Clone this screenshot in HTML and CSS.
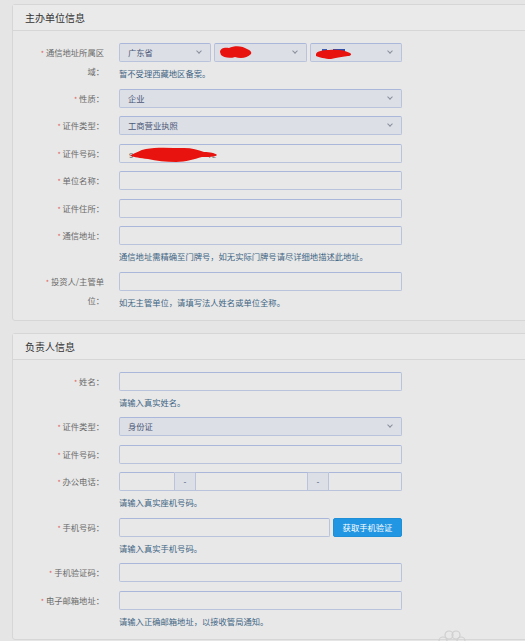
FILE: index.html
```html
<!DOCTYPE html>
<html lang="zh-CN">
<head>
<meta charset="utf-8">
<title>备案信息</title>
<link rel="stylesheet" href="styles.css">
</head>
<body>
<div class="page">
  <section class="panel">
    <div class="panel-head">主办单位信息</div>
    <div class="panel-body">
      <div class="row">
        <label class="lbl"><span class="req">*</span> 通信地址所属区域：</label>
        <div class="ctl">
          <div class="sel-group">
            <div class="sel"><span>广东省</span><i class="chev"></i></div>
            <div class="sel redacted"><svg class="blob" width="40" height="18" viewBox="0 0 40 18"><path d="M3 8 C3 4 8 3 12 4 C18 1 26 2 30 5 C33 6 35 8 34 10 C30 14 24 15 18 13 C12 15 6 13 4 11 Z" fill="#e8120e"/></svg><i class="chev"></i></div>
            <div class="sel redacted"><svg class="blob" width="42" height="18" viewBox="0 0 42 18"><rect x="9" y="5" width="5" height="3" fill="#3b5bb0"/><rect x="20" y="5" width="12" height="3" fill="#2f4fa8"/><path d="M3 10 C4 7 10 6 16 6 C24 5 32 6 37 9 C39 10 38 12 35 12 C28 13 22 14 18 15 C12 15 6 13 3 12 Z" fill="#e8120e"/></svg><i class="chev"></i></div>
          </div>
          <p class="help">暂不受理西藏地区备案。</p>
        </div>
      </div>
      <div class="row">
        <label class="lbl"><span class="req">*</span> 性质：</label>
        <div class="ctl"><div class="sel"><span>企业</span><i class="chev"></i></div></div>
      </div>
      <div class="row">
        <label class="lbl"><span class="req">*</span> 证件类型：</label>
        <div class="ctl"><div class="sel"><span>工商营业执照</span><i class="chev"></i></div></div>
      </div>
      <div class="row">
        <label class="lbl"><span class="req">*</span> 证件号码：</label>
        <div class="ctl"><div class="inp redacted"><svg class="blob" width="100" height="19" viewBox="0 0 100 19"><text x="7" y="13" font-size="8" fill="#555" font-family="Liberation Sans, sans-serif">9</text><text x="86" y="13" font-size="7" fill="#666" font-family="Liberation Sans, sans-serif">7L</text><path d="M9 10 C14 8 18 5 24 4 C34 2 48 3 62 3 C70 3 76 5 82 7 C88 7 93 8 95 10 C93 12 86 12 80 12 C72 14 64 17 54 17 C44 17 34 16 26 14 C18 13 12 12 9 11 Z" fill="#e8120e"/></svg></div></div>
      </div>
      <div class="row">
        <label class="lbl"><span class="req">*</span> 单位名称：</label>
        <div class="ctl"><div class="inp"></div></div>
      </div>
      <div class="row">
        <label class="lbl"><span class="req">*</span> 证件住所：</label>
        <div class="ctl"><div class="inp"></div></div>
      </div>
      <div class="row">
        <label class="lbl"><span class="req">*</span> 通信地址：</label>
        <div class="ctl">
          <div class="inp"></div>
          <p class="help">通信地址需精确至门牌号，如无实际门牌号请尽详细地描述此地址。</p>
        </div>
      </div>
      <div class="row">
        <label class="lbl"><span class="req">*</span> 投资人/主管单位：</label>
        <div class="ctl">
          <div class="inp"></div>
          <p class="help">如无主管单位，请填写法人姓名或单位全称。</p>
        </div>
      </div>
    </div>
  </section>

  <section class="panel">
    <div class="panel-head">负责人信息</div>
    <div class="panel-body">
      <div class="row">
        <label class="lbl"><span class="req">*</span> 姓名：</label>
        <div class="ctl">
          <div class="inp"></div>
          <p class="help">请输入真实姓名。</p>
        </div>
      </div>
      <div class="row">
        <label class="lbl"><span class="req">*</span> 证件类型：</label>
        <div class="ctl"><div class="sel"><span>身份证</span><i class="chev"></i></div></div>
      </div>
      <div class="row">
        <label class="lbl"><span class="req">*</span> 证件号码：</label>
        <div class="ctl"><div class="inp"></div></div>
      </div>
      <div class="row">
        <label class="lbl"><span class="req">*</span> 办公电话：</label>
        <div class="ctl">
          <div class="phone">
            <div class="inp p1"></div>
            <div class="addon">-</div>
            <div class="inp p2"></div>
            <div class="addon">-</div>
            <div class="inp p3"></div>
          </div>
          <p class="help">请输入真实座机号码。</p>
        </div>
      </div>
      <div class="row">
        <label class="lbl"><span class="req">*</span> 手机号码：</label>
        <div class="ctl">
          <div class="mobile">
            <div class="inp"></div>
            <button class="btn" type="button">获取手机验证</button>
          </div>
          <p class="help">请输入真实手机号码。</p>
        </div>
      </div>
      <div class="row">
        <label class="lbl"><span class="req">*</span> 手机验证码：</label>
        <div class="ctl"><div class="inp"></div></div>
      </div>
      <div class="row">
        <label class="lbl"><span class="req">*</span> 电子邮箱地址：</label>
        <div class="ctl">
          <div class="inp"></div>
          <p class="help">请输入正确邮箱地址，以接收管局通知。</p>
        </div>
      </div>
    </div>
  </section>
</div>
<svg class="watermark" width="34" height="16" viewBox="0 0 34 16">
  <circle cx="9" cy="13" r="4" fill="none" stroke="#cfcfcf" stroke-width="1.2"/>
  <circle cx="15" cy="7" r="4" fill="none" stroke="#cfcfcf" stroke-width="1.2"/>
  <circle cx="22" cy="7" r="4" fill="none" stroke="#cfcfcf" stroke-width="1.2"/>
  <circle cx="27" cy="13" r="4" fill="none" stroke="#cfcfcf" stroke-width="1.2"/>
</svg>
</body>
</html>
```

FILE: styles.css
```css
* { box-sizing: border-box; }

html, body {
  margin: 0;
  padding: 0;
  background: #e5e5e5;
  height: 641px;
  overflow: hidden;
}

body {
  font-family: "Noto Sans CJK SC", "Noto Sans", sans-serif;
  font-size: 8.3px;
  line-height: 19px;
  color: #666;
  position: relative;
}

.page {
  padding: 4px 0 0 12px;
  overflow: hidden;
}

.panel {
  margin-right: -6px;
  background: #e8e8e8;
  border: 1px solid #d6d6d6;
  border-radius: 3px;
}

.panel + .panel {
  margin-top: 12px;
}

.panel-head {
  height: 26px;
  line-height: 25px;
  padding-left: 12px;
  font-size: 10px;
  color: #333;
  background: #eaeaea;
  border-bottom: 1px solid #d6d6d6;
}

.panel-body {
  padding: 12px 0 11px 21px;
}

.row {
  display: grid;
  grid-template-columns: 70px 283px;
  column-gap: 15px;
  align-items: start;
  margin-bottom: 8.5px;
}

.row:last-child {
  margin-bottom: 0;
}

.lbl {
  display: block;
  height: 19px;
  text-align: right;
  line-height: 19px;
  color: #6a6a6a;
}

.req {
  color: #e0605a;
  font-size: 7px;
  line-height: 0;
}

.ctl {
  min-width: 0;
}

.help {
  margin: 0;
  padding-top: 4px;
  height: 18px;
  line-height: 14px;
  color: #3e6584;
  white-space: nowrap;
  overflow: hidden;
}

.inp,
.sel {
  position: relative;
  height: 19px;
  border: 1px solid #b9c3dc;
  border-top-color: #aab7da;
  border-radius: 2px;
  background: #e8e8e8;
}

.sel {
  background: #dcdfe6;
  color: #4c5878;
  line-height: 17px;
  padding-left: 8px;
}

.chev {
  position: absolute;
  right: 9px;
  top: 5px;
  width: 4px;
  height: 4px;
  border-right: 1px solid #8a8f9c;
  border-bottom: 1px solid #8a8f9c;
  transform: rotate(45deg);
}

.sel-group {
  display: grid;
  grid-template-columns: 1fr 1fr 1fr;
  column-gap: 3px;
}

.blob {
  position: absolute;
  left: 2px;
  top: 0;
}

.phone {
  display: flex;
  height: 19px;
}

.phone .inp {
  border-radius: 0;
}

.phone .p1 { width: 56px; border-radius: 2px 0 0 2px; }
.phone .p2 { width: 113px; }
.phone .p3 { flex: 1; border-radius: 0 2px 2px 0; }

.addon {
  width: 20px;
  height: 19px;
  line-height: 17px;
  text-align: center;
  background: #dcdfe6;
  border-top: 1px solid #b9c3dc;
  border-bottom: 1px solid #b9c3dc;
  color: #4c5878;
}

.mobile {
  display: flex;
  gap: 3px;
  height: 19px;
}

.mobile .inp {
  flex: 1;
}

.btn {
  width: 69px;
  height: 19px;
  padding: 0;
  border: 1px solid #1f8fd8;
  border-radius: 2px;
  background: #2196e3;
  color: #fff;
  font-family: inherit;
  font-size: 8.3px;
  line-height: 17px;
}

.watermark {
  position: absolute;
  left: 434px;
  top: 628px;
}
```
